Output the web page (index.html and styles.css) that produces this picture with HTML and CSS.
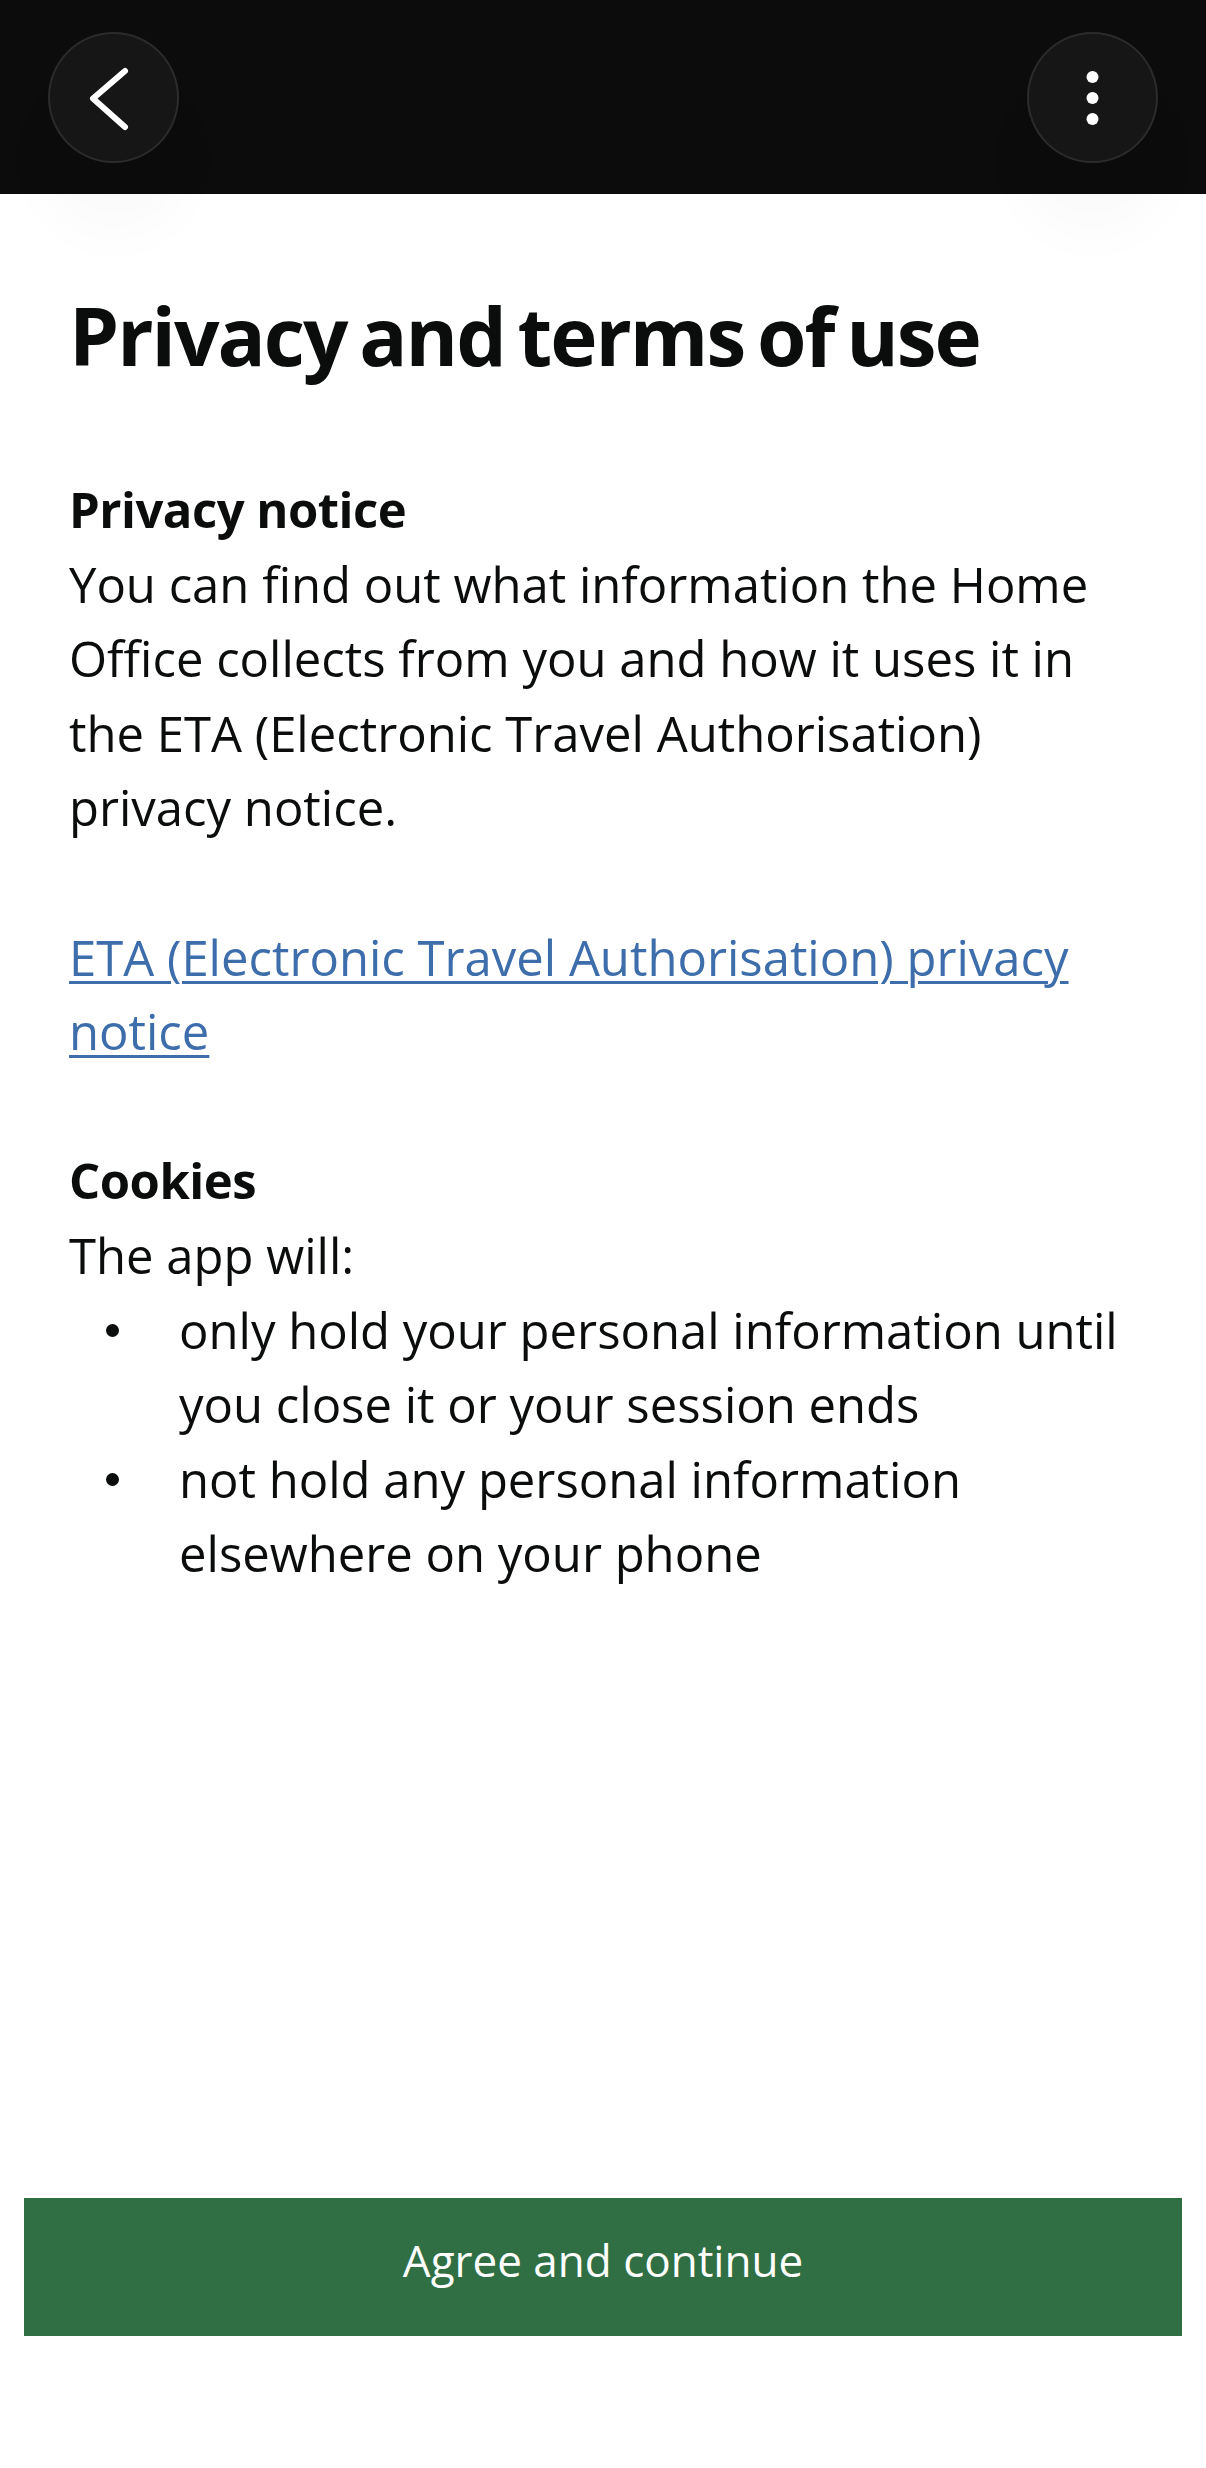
FILE: index.html
```html
<!DOCTYPE html>
<html lang="en">
<head>
<meta charset="utf-8">
<title>Privacy and terms of use</title>
<link rel="stylesheet" href="styles.css">
</head>
<body>
<div class="page">
  <header class="topbar">
    <button class="round-btn" aria-label="Back">
      <svg class="icon" viewBox="0 0 131 131" width="131" height="131" aria-hidden="true">
        <path d="M77 39 L45 66.5 L77 95" fill="none" stroke="#ffffff" stroke-width="6" stroke-linecap="round" stroke-linejoin="round"/>
      </svg>
    </button>
    <button class="round-btn" aria-label="More options">
      <svg class="icon" viewBox="0 0 131 131" width="131" height="131" aria-hidden="true">
        <circle cx="65.5" cy="45" r="6" fill="#ffffff"/>
        <circle cx="65.5" cy="66" r="6" fill="#ffffff"/>
        <circle cx="65.5" cy="87" r="6" fill="#ffffff"/>
      </svg>
    </button>
  </header>

  <main class="content">
    <h1 class="title">Privacy and terms of use</h1>

    <section class="block">
      <h2 class="subhead">Privacy notice</h2>
      <p class="text">You can find out what information the Home Office collects from you and how it uses it in the ETA (Electronic Travel Authorisation) privacy notice.</p>
    </section>

    <p class="text gap-before"><a class="link" href="#">ETA (Electronic Travel Authorisation) privacy notice</a></p>

    <section class="block gap-before">
      <h2 class="subhead">Cookies</h2>
      <p class="text">The app will:</p>
      <ul class="bullets">
        <li class="bullet-item"><span class="dot"></span><span class="bullet-text">only hold your personal information until you close it or your session ends</span></li>
        <li class="bullet-item"><span class="dot"></span><span class="bullet-text">not hold any personal information elsewhere on your phone</span></li>
      </ul>
    </section>
  </main>

  <footer class="actions">
    <button class="primary-btn">Agree and continue</button>
  </footer>
</div>
</body>
</html>
```

FILE: styles.css
```css
html, body {
  margin: 0;
  padding: 0;
  height: 100%;
  background: #ffffff;
}

body {
  font-family: "Open Sans", "Noto Sans", "Liberation Sans", sans-serif;
  color: #0b0c0c;
}

.page {
  min-height: 100vh;
  display: flex;
  flex-direction: column;
}

.topbar {
  height: 194px;
  background: #0c0c0c;
  display: flex;
  justify-content: space-between;
  align-items: center;
  padding: 0 48px;
  flex: none;
}

.round-btn {
  width: 131px;
  height: 131px;
  border: none;
  padding: 0;
  margin: 0;
  border-radius: 50%;
  background: #161616;
  box-shadow: inset 0 0 0 2px #2b2b2b, 0 62px 60px 8px rgba(0, 0, 0, 0.022);
  display: block;
  cursor: pointer;
}

.icon {
  display: block;
}

.content {
  flex: 1;
  padding: 93px 69px 0 69px;
}

.title {
  margin: 0;
  font-size: 80px;
  line-height: 96px;
  font-weight: 700;
  letter-spacing: -2px;
  word-spacing: -6px;
}

.block {
  margin: 0;
}

.block:first-of-type {
  margin-top: 89px;
}

.subhead {
  margin: 0;
  font-size: 49px;
  line-height: 74.6px;
  font-weight: 700;
  letter-spacing: -0.5px;
}

.text {
  margin: 0;
  font-size: 49px;
  line-height: 74.6px;
  font-weight: 400;
}

.gap-before {
  margin-top: 74.6px;
}

.link {
  color: #3d6dab;
  text-decoration: underline;
  text-decoration-thickness: 3px;
  text-underline-offset: 5px;
}

.bullets {
  list-style: none;
  margin: 0;
  padding: 0;
}

.bullet-item {
  display: flex;
  align-items: flex-start;
  font-size: 49px;
  line-height: 74.6px;
}

.dot {
  flex: none;
  width: 13px;
  height: 13px;
  border-radius: 50%;
  background: #0b0c0c;
  margin: 31px 0 0 37px;
}

.bullet-text {
  margin-left: 60px;
}

.actions {
  flex: none;
  padding: 0 24px 132px 24px;
}

.primary-btn {
  display: block;
  width: 100%;
  height: 138px;
  border: none;
  margin: 0;
  padding: 0 0 14px 0;
  background: #306e44;
  color: #ffffff;
  font-family: "Open Sans", "Noto Sans", "Liberation Sans", sans-serif;
  font-size: 44px;
  line-height: 124px;
  font-weight: 400;
  cursor: pointer;
}
```
